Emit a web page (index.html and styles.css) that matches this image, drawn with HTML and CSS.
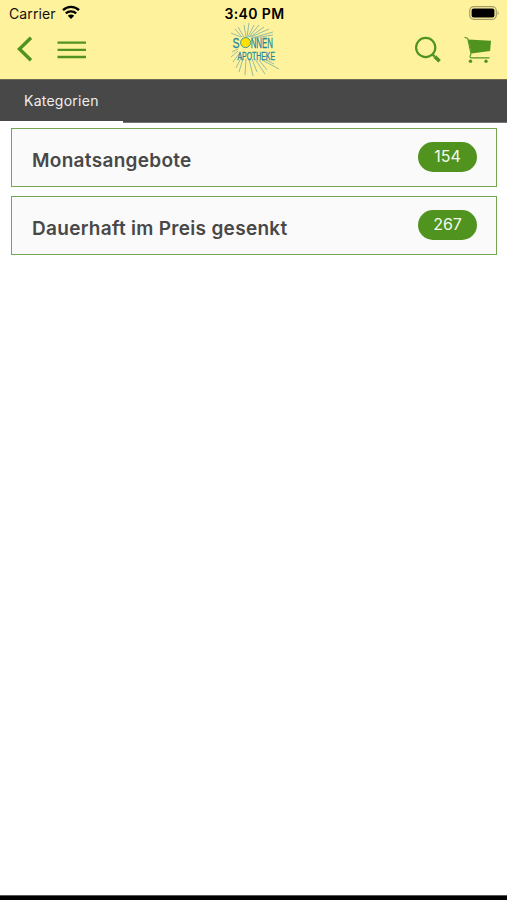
FILE: index.html
```
<!DOCTYPE html>
<html lang="de">
    <head>
        <meta charset="utf-8">
        <title>Sonnen Apotheke</title>
        <link rel="stylesheet" href="styles.css">
    </head>
    <body>
        <header class="header">
            <div class="status">
                <div class="carrier">
                    <span>Carrier</span>
                    <svg width="18" height="14" viewBox="0 0 18 14">
                        <path d="M1 5.2a11.5 11.5 0 0 1 16 0M3.8 8.4a7.5 7.5 0 0 1 10.4 0" fill="none" stroke="#000" stroke-width="2.3"/>
                        <path d="M5.8 10.8a4.6 4.6 0 0 1 6.4 0L9 14z"/>
                    </svg>
                </div>
                <div class="time">3:40 PM</div>
                <svg class="battery" width="31" height="14" viewBox="0 0 31 14">
                    <rect x=".7" y=".7" width="26.6" height="12.6" rx="4" fill="none" stroke="#a49d67" stroke-width="1.2"/>
                    <rect x="2.6" y="2.6" width="22.8" height="8.8" rx="2"/>
                    <path d="M28.6 4.7q2.2 2.3 0 4.6z" fill="#a49d67"/>
                </svg>
            </div>
            <nav class="navbar">
                <div class="nav_left">
                    <svg width="16" height="26" viewBox="0 0 16 26">
                        <path d="M14 1.8L2.4 13 14 24.2" fill="none" stroke="#50931f" stroke-width="3.5"/>
                    </svg>
                    <svg class="menu" width="29" height="18" viewBox="0 0 29 18">
                        <path d="M.5 1.7h28.5M.5 8.9h28.5M.5 16h28.5" stroke="#50931f" stroke-width="2.3"/>
                    </svg>
                </div>
                <svg class="logo" width="54" height="54" viewBox="0 0 54 54">
                    <g fill="none" stroke="#8ab5a3" stroke-width=".9">
                        <path d="M16 14L10 4M18 14L16 2M19 14L21 0M20 14L26 2M21 14L31 2M22 14L36 4M23 14L41 6M24 15L45 9M14 14L7 6M13 14L3 10M26 15L45 12"/>
                        <path d="M10 26L4 29M10 28L3 34M11 31L5 39M13 35L8 45M15 36L11 49M18 36L17 52M21 36L25 53M24 36L29 49M27 36L37 51M31 37L39 47M34 37L51 46M38 37L46 41"/>
                    </g>
                    <g class="logo_text">
                        <text transform="translate(4.6 25) scale(.7 1)" font-size="15">S</text>
                        <text transform="translate(22.7 25) scale(.56 1)" font-size="14">NNEN</text>
                        <text transform="translate(9.5 37) scale(.6 1)" font-size="11.5">APOTHEKE</text>
                    </g>
                    <circle cx="17.6" cy="19.6" r="5" fill="#ffe000" stroke="#45988f" stroke-width="1"/>
                </svg>
                <div class="nav_right">
                    <svg width="28" height="28" viewBox="0 0 28 28">
                        <circle cx="11.7" cy="11.5" r="9.6" fill="none" stroke="#50931f" stroke-width="2.2"/>
                        <path d="M18.3 18.3l2.3 2.3" stroke="#50931f" stroke-width="2.2"/>
                        <path d="M20.8 20.6l4.8 4.6" stroke="#50931f" stroke-width="3.6"/>
                    </svg>
                    <svg class="cart" width="28" height="28" viewBox="0 0 28 28">
                        <path d="M.6 1.2l3.1 1.2L7 17.8l-.9 2.5q-.2 1.6 1.3 1.6H25.5" fill="none" stroke="#50931f" stroke-width="1.1"/>
                        <path d="M4.2 3.5l22.8 1.3-.9 10.3-18.7 2.3z" fill="#50931f"/>
                        <circle cx="6.5" cy="25.2" r="1.7" fill="#50931f"/>
                        <circle cx="22" cy="25.2" r="1.7" fill="#50931f"/>
                    </svg>
                </div>
            </nav>
        </header>
        <div class="tabs">
            <div class="tab active"><span>Kategorien</span></div>
        </div>
        <main class="list">
            <div class="item">
                <span class="name">Monatsangebote</span>
                <span class="count">154</span>
            </div>
            <div class="item">
                <span class="name">Dauerhaft im Preis gesenkt</span>
                <span class="count">267</span>
            </div>
        </main>
        <div class="bottom"></div>
    </body>
</html>
```
FILE: styles.css
```
* {
    box-sizing: border-box;
}
body {
    margin: 0;
    height: 900px;
    display: flex;
    flex-direction: column;
    overflow: hidden;
    background: #fff;
    font-family: Inter, "Liberation Sans", sans-serif;
}
svg {
    display: block;
    flex-shrink: 0;
}
.header {
    height: 79px;
    background: #fff29c;
}
.status {
    height: 22px;
    padding: 5px 7px 0 9px;
    display: grid;
    grid-template-columns: 1fr auto 1fr;
    color: #111;
    font-size: 14px;
    line-height: 17px;
}
.carrier {
    display: flex;
    gap: 6px;
    letter-spacing: 0.1px;
}
.time {
    font-weight: 600;
    color: #000;
    letter-spacing: 0.4px;
}
.battery {
    justify-self: end;
    margin-top: 1px;
}
.navbar {
    height: 57px;
    padding: 0 15px 0 17px;
    display: grid;
    grid-template-columns: 1fr 54px 1fr;
}
.nav_left {
    display: flex;
    padding-top: 14px;
}
.menu {
    margin: 5px 0 0 24px;
}
.logo {
    margin-top: 1px;
    overflow: visible;
}
.logo_text {
    font-family: "Liberation Sans", sans-serif;
    fill: #23879c;
    stroke: #23879c;
    stroke-width: 0.3px;
}
.nav_right {
    display: flex;
    justify-content: flex-end;
    padding-top: 14px;
}
.cart {
    margin-left: 22px;
}
.tabs {
    height: 44px;
    display: flex;
    background: #484848;
    border-top: 1px solid #6c6a55;
    border-bottom: 1px solid #777;
}
.tab {
    width: 123px;
    height: 43px;
    padding: 12px 0 0 24px;
    color: #eee;
    font-size: 14px;
    line-height: 18px;
    letter-spacing: 0.25px;
}
.active {
    border-bottom: 2px solid #fff;
}
.list {
    flex: 1;
    display: flex;
    flex-direction: column;
    gap: 9px;
    padding: 5px 10px 0 11px;
}
.item {
    height: 59px;
    padding: 13px 19px 0 20px;
    display: flex;
    justify-content: space-between;
    align-items: flex-start;
    border: 1.5px solid #74a650;
    background: #fafafa;
}
.name {
    margin-top: 7px;
    color: #484848;
    font-size: 19px;
    font-weight: 600;
    line-height: 24px;
    letter-spacing: 0.3px;
}
.count {
    width: 59px;
    height: 30px;
    border-radius: 15px;
    background: #50931f;
    color: #f5fbef;
    font-size: 16px;
    line-height: 29px;
    text-align: center;
}
.bottom {
    height: 5px;
    background: #000;
    border-top: 1px solid #555;
}
```
